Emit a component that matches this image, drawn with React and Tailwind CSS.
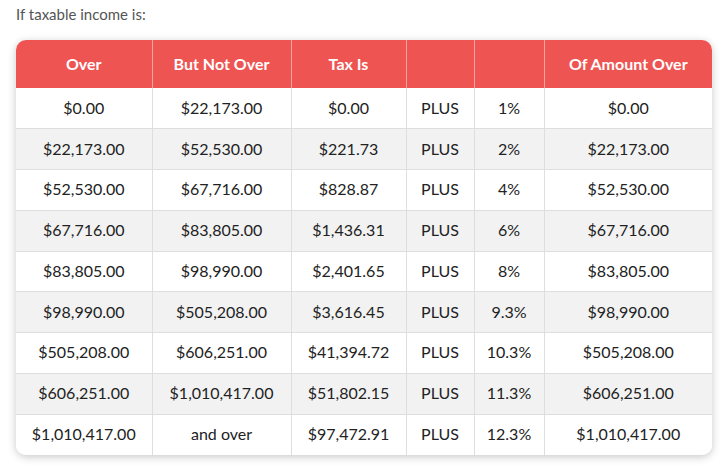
import React from "react";

const rows = [
  ["$0.00", "$22,173.00", "$0.00", "1%", "$0.00"],
  ["$22,173.00", "$52,530.00", "$221.73", "2%", "$22,173.00"],
  ["$52,530.00", "$67,716.00", "$828.87", "4%", "$52,530.00"],
  ["$67,716.00", "$83,805.00", "$1,436.31", "6%", "$67,716.00"],
  ["$83,805.00", "$98,990.00", "$2,401.65", "8%", "$83,805.00"],
  ["$98,990.00", "$505,208.00", "$3,616.45", "9.3%", "$98,990.00"],
  ["$505,208.00", "$606,251.00", "$41,394.72", "10.3%", "$505,208.00"],
  ["$606,251.00", "$1,010,417.00", "$51,802.15", "11.3%", "$606,251.00"],
  ["$1,010,417.00", "and over", "$97,472.91", "12.3%", "$1,010,417.00"],
];

export default function App() {
  return (
    <div className="w-[728px] h-[476px] bg-white" style={{ fontFamily: "Lato, 'Open Sans', sans-serif" }}>
      <p className="pl-4 pt-[3px] text-[15px] leading-[22px] text-[#555]">If taxable income is:</p>
      <div className="ml-4 mt-[15px] w-[696px] rounded-[10px] overflow-hidden shadow-[0_2px_8px_rgba(0,0,0,0.22)]">
        <table className="w-full table-fixed border-collapse text-[16px] text-[#222]">
          <colgroup>
            <col className="w-[136px]" />
            <col className="w-[139px]" />
            <col className="w-[115px]" />
            <col className="w-[68px]" />
            <col className="w-[70px]" />
            <col className="w-[168px]" />
          </colgroup>
          <thead>
            <tr className="bg-[#ee5452] text-white h-[48px]">
              <th className="font-bold border-r border-[#f3a3a2] pb-[1px]">Over</th>
              <th className="font-bold border-r border-[#f3a3a2] pb-[1px]">But Not Over</th>
              <th className="font-bold border-r border-[#f3a3a2] pb-[1px]">Tax Is</th>
              <th className="font-bold border-r border-[#f3a3a2]"></th>
              <th className="font-bold border-r border-[#f3a3a2]"></th>
              <th className="font-bold pb-[1px]">Of Amount Over</th>
            </tr>
          </thead>
          <tbody>
            {rows.map((r, i) => (
              <tr key={i} className={`${i === 8 ? "h-[41px]" : "h-[40.75px]"} ${i % 2 === 1 ? "bg-[#f2f2f2]" : "bg-white"} ${i > 0 ? "border-t border-[#dedede]" : ""}`}>
                <td className="text-center border-r border-[#dedede] pb-[1px]">{r[0]}</td>
                <td className="text-center border-r border-[#dedede] pb-[1px]">{r[1]}</td>
                <td className="text-center border-r border-[#dedede] pb-[1px]">{r[2]}</td>
                <td className="text-center border-r border-[#dedede] pb-[1px]">PLUS</td>
                <td className="text-center border-r border-[#dedede] pb-[1px]">{r[3]}</td>
                <td className="text-center pb-[1px]">{r[4]}</td>
              </tr>
            ))}
          </tbody>
        </table>
      </div>
    </div>
  );
}
